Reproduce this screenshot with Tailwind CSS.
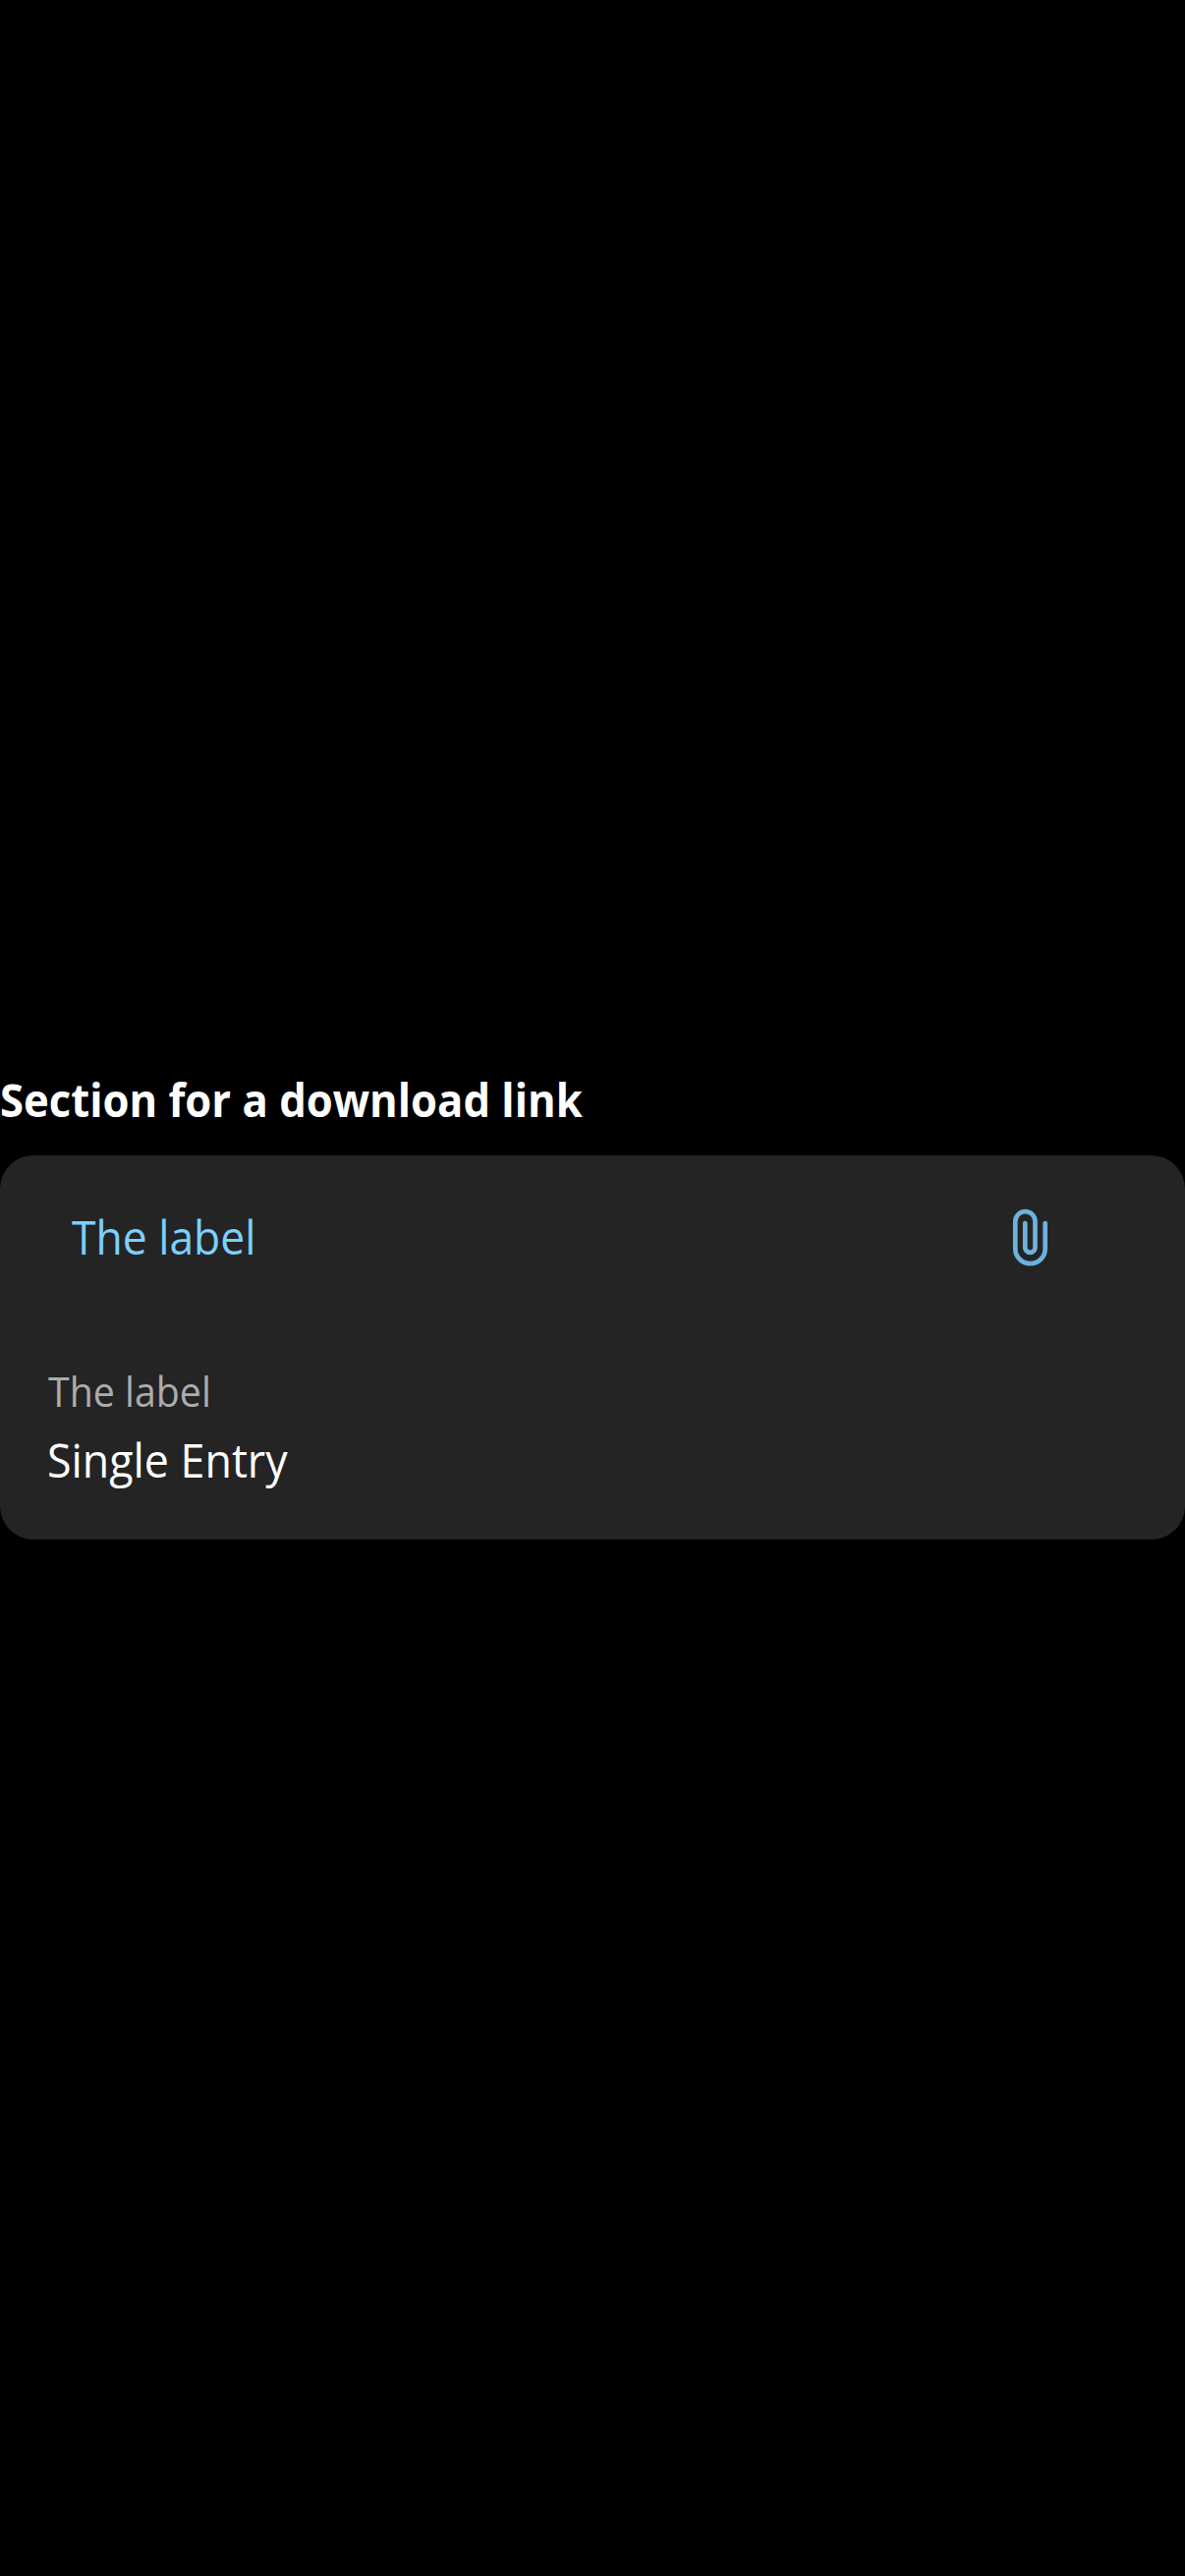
<!DOCTYPE html>
<html lang="en">
<head>
<meta charset="utf-8">
<title>Download link</title>
<script src="https://cdn.jsdelivr.net/npm/@tailwindcss/browser@4"></script>
</head>
<body class="bg-black">
<main class="flex h-[2622px] w-[1206px] flex-col items-stretch overflow-hidden bg-black pt-[1087px] font-['Open_Sans',sans-serif] text-[47px] leading-[64px] text-white">
  <h1 class="origin-left scale-x-[0.928] self-start whitespace-nowrap font-bold">Section for a download link</h1>
  <section class="mt-[25px] flex h-[391px] flex-col rounded-[34px] bg-[#242424] px-12 pt-[50px]">
    <a class="flex h-16 items-center justify-between pr-[90px] pl-[25px] text-[#7bd0ff]">
      <span class="origin-left scale-x-[0.945] whitespace-nowrap pt-px">The label</span>
      <svg class="mr-[-10px] h-16 w-[60px] shrink-0" viewBox="18 16 60 64" fill="none" stroke="#6cb2de" stroke-width="4.7" stroke-linecap="round"><path d="M63.7 35V61a15.2 15.2 0 0 1-30.4 0V33.3a10.1 10.1 0 0 1 20.2 0V59.7a5.1 5.1 0 0 1-10.2 0V35"/></svg>
    </a>
    <p class="mt-[98px] ml-px origin-left scale-x-[0.936] self-start whitespace-nowrap text-[42px] leading-[56px] text-[#acacac]">The label</p>
    <p class="mt-[10px] origin-left scale-x-[0.952] self-start whitespace-nowrap">Single Entry</p>
  </section>
</main>
</body>
</html>
